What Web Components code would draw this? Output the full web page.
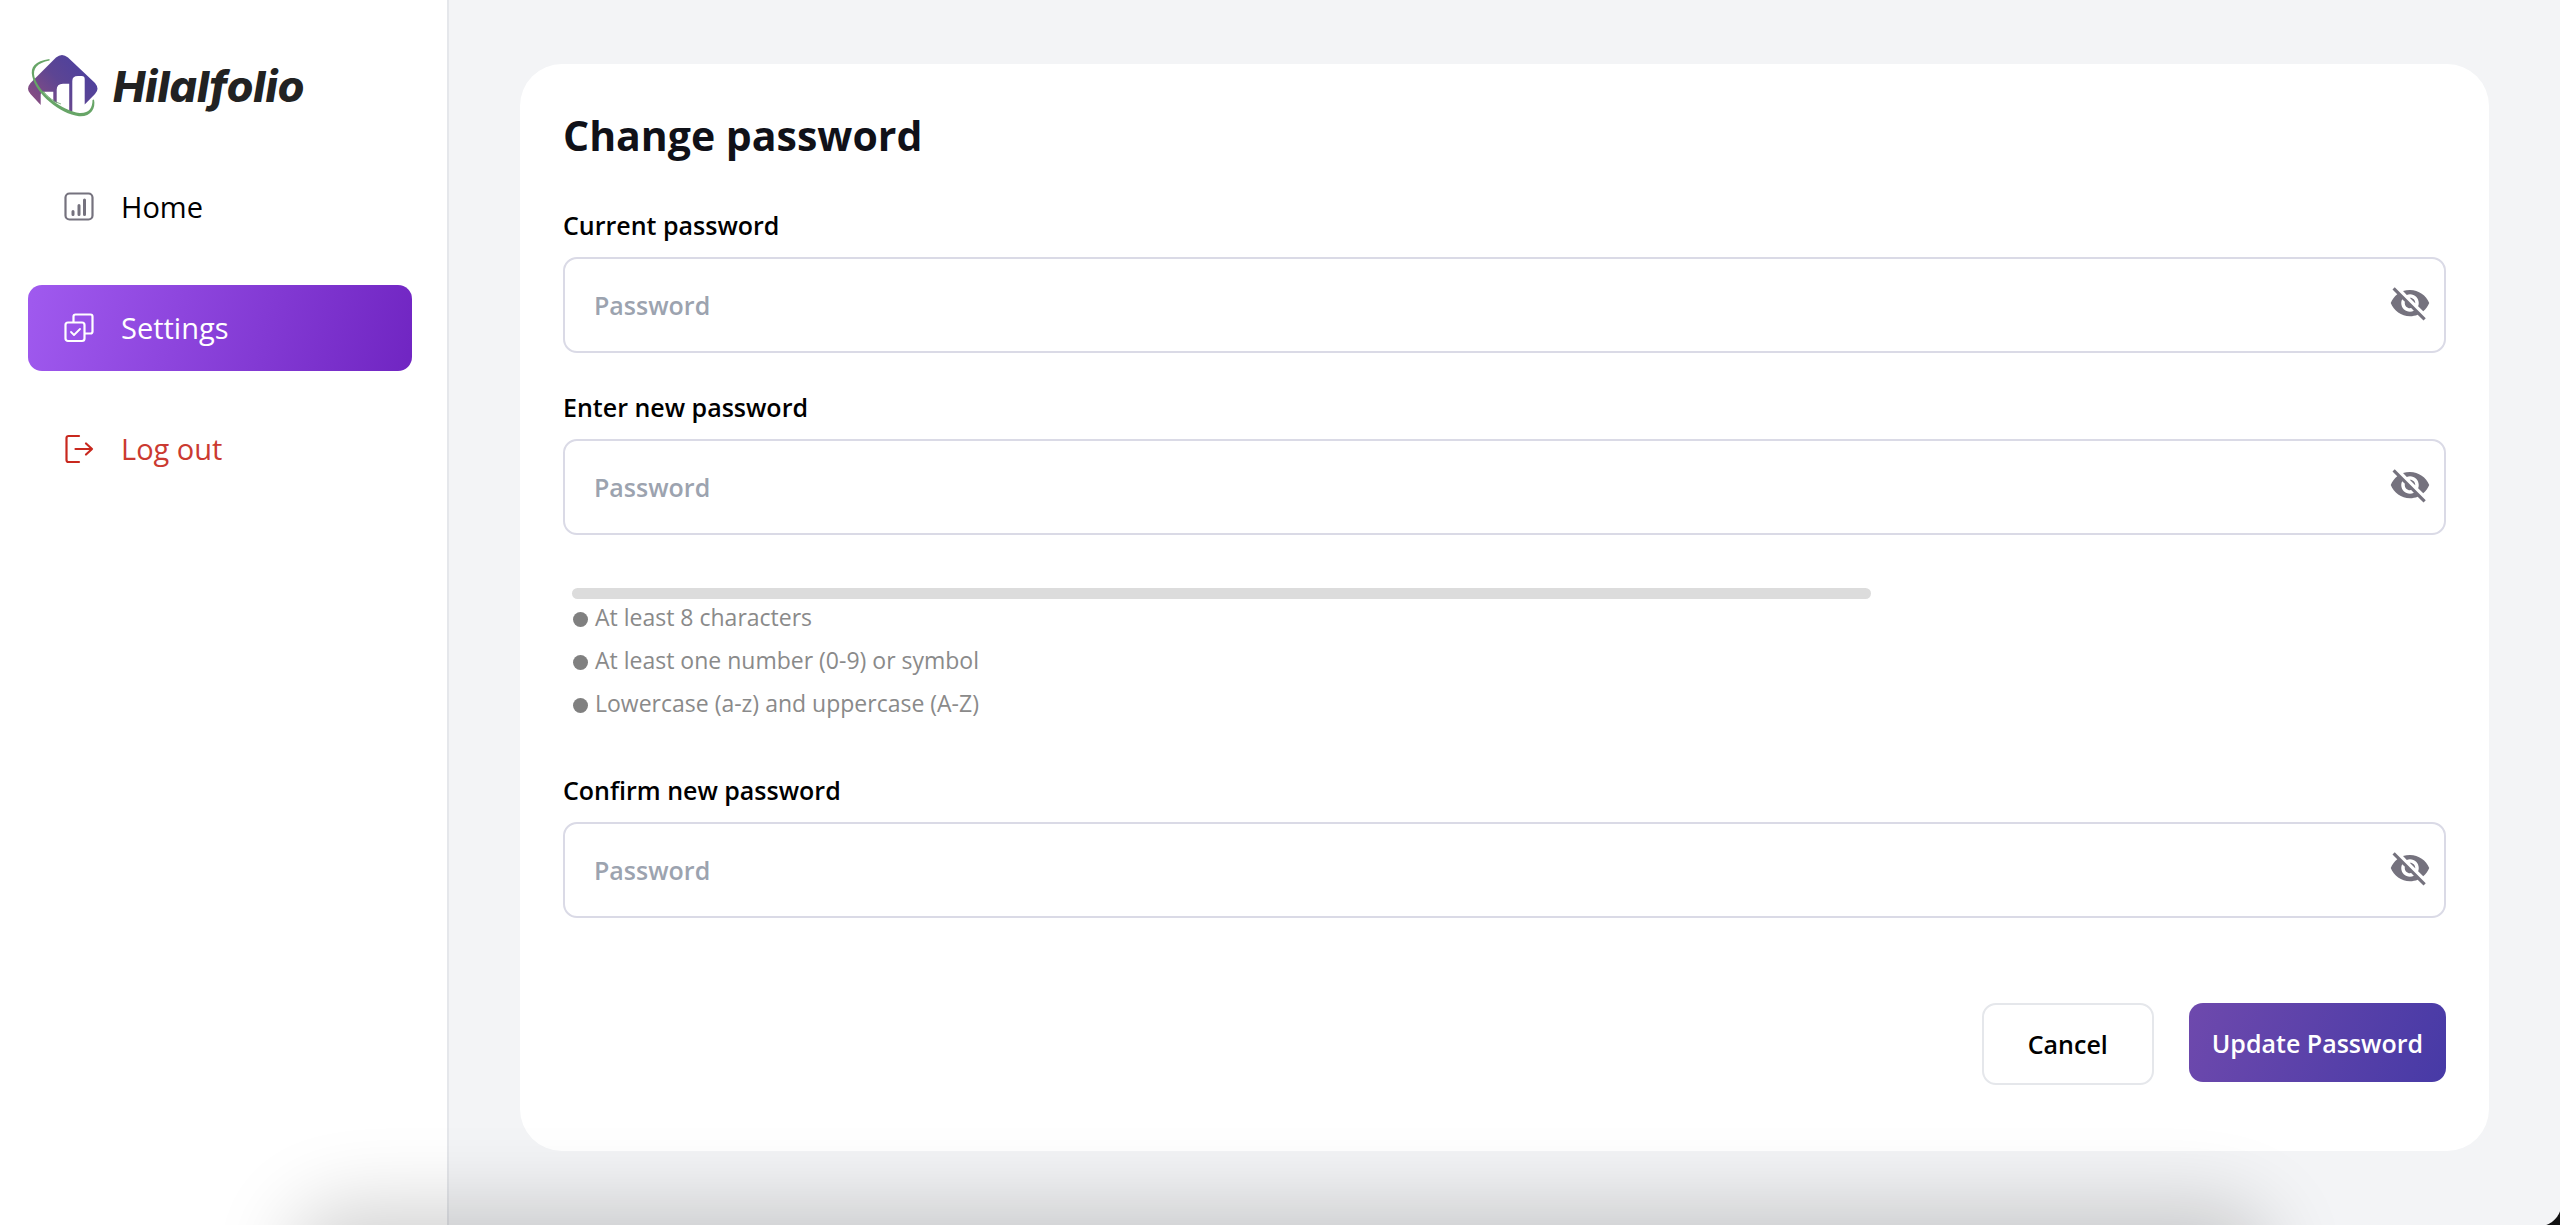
<!DOCTYPE html>
<html lang="en">
<head>
<meta charset="utf-8">
<meta name="viewport" content="width=device-width, initial-scale=1">
<title>Hilalfolio – Change password</title>
<style>
  html, body { height: 100%; }
  body { margin: 0; background: #f3f4f6; color: #000; font-family: "Open Sans", "Noto Sans", sans-serif; }
</style>
</head>
<body>
<app-shell>
  <side-bar slot="sidebar">
    <brand-logo slot="brand"></brand-logo>
    <nav-item icon="home" href="#home">Home</nav-item>
    <nav-item icon="settings" href="#settings" active>Settings</nav-item>
    <nav-item icon="logout" href="#logout" danger>Log out</nav-item>
  </side-bar>
  <settings-card heading="Change password">
    <password-field label="Current password"></password-field>
    <password-field label="Enter new password"></password-field>
    <password-rules>
      <li>At least 8 characters</li>
      <li>At least one number (0-9) or symbol</li>
      <li>Lowercase (a-z) and uppercase (A-Z)</li>
    </password-rules>
    <password-field label="Confirm new password"></password-field>
    <action-button slot="actions">Cancel</action-button>
    <action-button slot="actions" primary>Update Password</action-button>
  </settings-card>
</app-shell>

<script>
const ICONS = {
  home: `<svg viewBox="0 0 30 30" fill="none" stroke="#75727e" stroke-width="2.2" stroke-linecap="round">
    <rect x="1.5" y="1.5" width="27" height="26" rx="4"/><path stroke-width="3" d="M9 19.500v3M15 13.500v9M20.500 8v14.500"/></svg>`,
  settings: `<svg viewBox="0 0 30 30" fill="none" stroke="#fff" stroke-width="2.200" stroke-linejoin="round" stroke-linecap="round">
    <rect x="1.500" y="9.500" width="19" height="18.500" rx="2.500"/>
    <path d="M9.500 9V3.500a2 2 0 0 1 2-2h15a2 2 0 0 1 2 2v15a2 2 0 0 1-2 2H21"/>
    <path stroke-width="1.800" d="M7 19l3 3 6-6"/></svg>`,
  logout: `<svg viewBox="0 0 30 30" fill="none" stroke="#c8281e" stroke-width="2.200" stroke-linejoin="round" stroke-linecap="round">
    <path d="M15 2H4.500A2 2 0 0 0 2.500 4v22a2 2 0 0 0 2 2H15M11.500 15H28M22 9.500l6 5.500-6 5.500"/></svg>`
};

function define(name, html, setup) {
  customElements.define(name, class extends HTMLElement {
    connectedCallback() {
      if (this.shadowRoot) return;
      const root = this.attachShadow({ mode: 'open' });
      root.innerHTML = html;
      if (setup) setup(this, root);
    }
  });
}

define('app-shell', `
  <style>
    :host { display: flex; min-height: 100vh; position: relative; overflow: hidden; }
    main { flex: 1; min-width: 0; padding: 64px 71px 72px; }
    .dock-shade { position: absolute; left: 330px; right: 330px; bottom: -60px; height: 40px; border-radius: 40px;
      box-shadow: 0 0 80px 40px rgba(0,0,0,.18); pointer-events: none; }
    .corner { position: absolute; right: 0; bottom: 0; width: 22px; height: 22px;
      background: radial-gradient(circle at 0 0, transparent 23px, #111 24px); pointer-events: none; }
  </style>
  <slot name="sidebar"></slot>
  <main><slot></slot></main>
  <div class="dock-shade"></div>
  <div class="corner"></div>`);

define('side-bar', `
  <style>
    :host { display: block; box-sizing: border-box; width: 449px; flex: none; background: #fff; border-right: 2px solid #e5e7eb; padding: 52px 35px 40px 28px; }
    nav { display: flex; flex-direction: column; gap: 35px; margin-top: 44px; }
  </style>
  <slot name="brand"></slot>
  <nav><slot></slot></nav>`);

define('brand-logo', `
  <style>
    :host { display: flex; align-items: center; gap: 15px; height: 68px; }
    svg { width: 70px; height: 66px; flex: none; }
    span { font-family: Inter, sans-serif; font-style: italic; font-weight: 800; font-size: 43px; line-height: 68px; font-feature-settings: "cv11"; color: #222; }
  </style>
  <svg viewBox="0 0 70 66" aria-hidden="true">
    <defs><linearGradient id="g" x1="0" y1="1" x2="1" y2="0.300"><stop offset="0" stop-color="#95507c"/><stop offset=".55" stop-color="#5d4593"/><stop offset="1" stop-color="#4b409f"/></linearGradient></defs>
    <path fill="url(#g)" d="M28 4.500Q34-.5 40 4.500L67 30Q72 36 67 41L56.700 51.500V26q0-3-3-3H50q-5.700 0-5.700 5V58.500H41.200V30.700H35q-6.300 0-6.300 6V50l-3.400-2V38.700H17q-4.300 0-4.300 3V52L2.500 41Q-2.500 36 2.500 30Z"/>
    <path fill="#67a567" d="M21.500 6C7 8 2 14 4.300 23.500C8 41 32 61 51 63.200C62.500 64 68 56 66 46.500L64.500 47C64.500 55 61 60.500 51.500 60C35 58 10.500 40 6.500 24C4.500 15.500 9 10 21.500 7.500Z"/>
    <path fill="none" stroke="#67a567" stroke-width=".8" d="M15 38Q23 48 33 51"/>
  </svg>
  <span>Hilalfolio</span>`);

define('nav-item', `
  <style>
    :host { display: block; }
    a { display: flex; align-items: center; gap: 27px; height: 86px; padding: 0 35px 0 36px; border-radius: 14px; font-size: 29px; line-height: 40px; color: #000; text-decoration: none; }
    svg { display: block; width: 30px; height: 30px; }
    :host([active]) a { color: #fff; background: linear-gradient(105deg, #a05aef, #7025c2); }
    :host([danger]) a { color: #cb3a31; }
  </style>
  <a><span class="icon" aria-hidden="true"></span><slot></slot></a>`,
  (el, root) => {
    root.querySelector('a').href = el.getAttribute('href');
    root.querySelector('.icon').innerHTML = ICONS[el.getAttribute('icon')];
  });

define('settings-card', `
  <style>
    :host { display: block; background: #fff; border-radius: 42px; padding: 39px 43px 66px; }
    h1 { margin: 0 0 40px; font-size: 41px; line-height: 64px; font-weight: 700; color: #101118; }
    form { display: flex; flex-direction: column; gap: 36px; }
    footer { display: flex; justify-content: flex-end; align-items: flex-start; gap: 35px; margin-top: 49px; }
  </style>
  <h1></h1>
  <form>
    <slot></slot>
    <footer><slot name="actions"></slot></footer>
  </form>`,
  (el, root) => { root.querySelector('h1').textContent = el.getAttribute('heading'); });

define('password-field', `
  <style>
    :host { display: block; }
    label { display: block; font-size: 25px; line-height: 36px; font-weight: 600; margin-bottom: 14px; }
    .box { display: flex; align-items: center; box-sizing: border-box; height: 96px; border: 2px solid #dadae6; border-radius: 14px; padding: 0 13px 0 29px; }
    input { flex: 1; min-width: 0; height: 100%; border: 0; padding: 0; outline: 0; background: none; font: 600 25px/36px "Open Sans", sans-serif; color: #000; }
    input::placeholder { color: #9ca3af; opacity: 1; }
    button { border: 0; background: none; padding: 0 0 4px; display: flex; cursor: pointer; }
    svg { width: 42px; height: 42px; }
  </style>
  <label for="pw"></label>
  <div class="box">
    <input id="pw" type="password" placeholder="Password">
    <button type="button" aria-label="Show password">
      <svg viewBox="0 0 24 24"><path fill="#75727e" d="M12 7c2.760 0 5 2.240 5 5 0 .650-.130 1.260-.360 1.830l2.920 2.920c1.510-1.260 2.700-2.890 3.430-4.750-1.730-4.390-6-7.500-11-7.500-1.400 0-2.740.250-3.980.700l2.160 2.160C10.740 7.130 11.350 7 12 7zM2 4.270l2.280 2.280.460.460C3.080 8.300 1.780 10.020 1 12c1.730 4.390 6 7.500 11 7.500 1.550 0 3.030-.300 4.380-.840l.420.420L19.730 22 21 20.730 3.270 3 2 4.270zM7.530 9.800l1.550 1.550c-.050.210-.080.430-.080.650 0 1.660 1.340 3 3 3 .220 0 .440-.030.650-.080l1.550 1.550c-.670.330-1.410.530-2.200.530-2.760 0-5-2.240-5-5 0-.790.200-1.530.530-2.200zm4.310-.780l3.150 3.150.020-.160c0-1.660-1.340-3-3-3l-.170.010z"/></svg>
    </button>
  </div>`,
  (el, root) => {
    const input = root.querySelector('input');
    root.querySelector('label').textContent = el.getAttribute('label');
    root.querySelector('button').addEventListener('click', () => {
      input.type = input.type === 'password' ? 'text' : 'password';
    });
  });

define('password-rules', `
  <style>
    :host { display: block; padding: 17px 19px 8px 9px; }
    .meter { width: 70%; height: 11px; border-radius: 6px; background: #dcdcdc; }
    ul { list-style: none; margin: 0; padding: 0; }
    ::slotted(li) { display: block; margin-bottom: 6px; font-size: 23px; line-height: 37px; color: #8a8a8a; }
  </style>
  <div class="meter"></div>
  <ul><slot></slot></ul>`,
  (el) => {
    for (const li of el.querySelectorAll('li')) li.prepend(document.createElement('rule-dot'));
  });

define('rule-dot', `
  <style>:host { display: inline-block; width: 15px; height: 15px; border-radius: 50%; background: #808080; margin: 0 7px 0 1px; vertical-align: -1px; }</style>`);

define('action-button', `
  <style>
    :host { display: block; }
    button { display: block; box-sizing: border-box; height: 82px; border: 2px solid #e5e7eb; border-radius: 14px; background: #fff; color: #000; padding: 0 44px; font: 600 25px/36px "Open Sans", sans-serif; cursor: pointer; }
    :host([primary]) button { height: 79px; border: 0; padding: 0 23px; color: #fff; background: linear-gradient(110deg, #6e49ad, #473aa6); }
  </style>
  <button type="button"><slot></slot></button>`);
</script>
</body>
</html>
